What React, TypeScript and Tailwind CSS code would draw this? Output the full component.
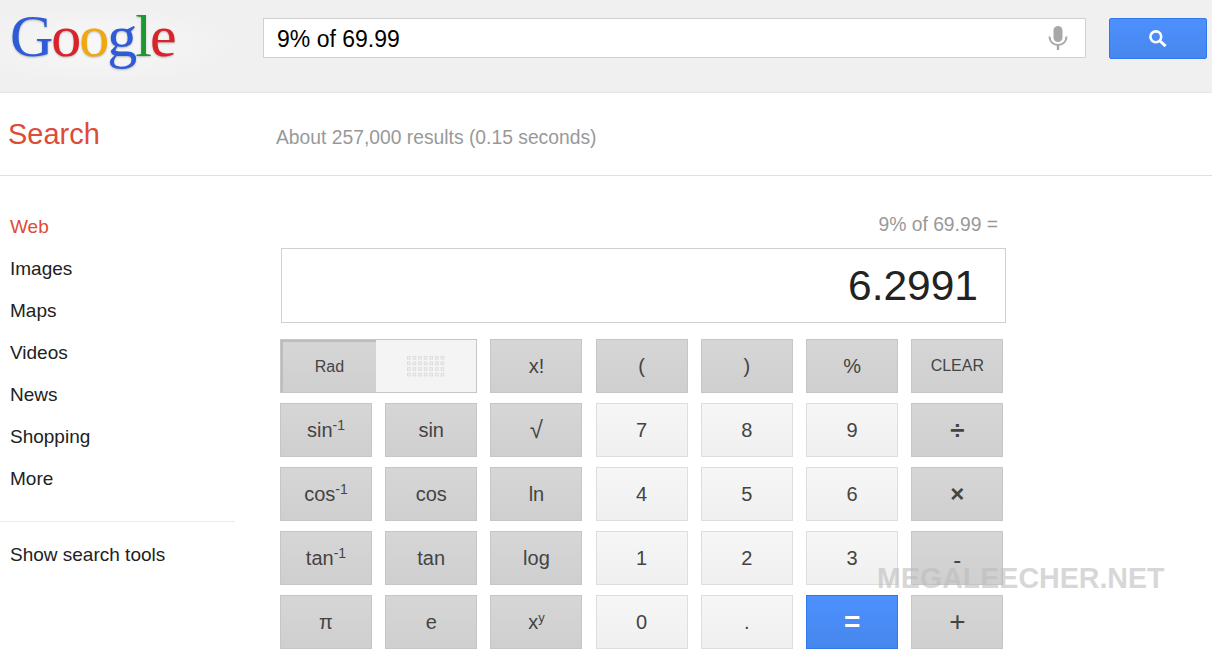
const font = { fontFamily: '"Liberation Sans", Arial, sans-serif' };

type Kind = "dark" | "light" | "blue";
const kinds: Record<Kind, string> = {
  dark: "border-[#c6c6c6] bg-gradient-to-b from-[#d6d6d6] to-[#cfcfcf] text-[#444444]",
  light: "border-[#dedede] bg-gradient-to-b from-[#f6f6f6] to-[#f0f0f0] text-[#444444]",
  blue: "border-[#3079ed] bg-gradient-to-b from-[#4d90fe] to-[#4787ed] text-white",
};

function Key({ kind = "dark", children, small }: { kind?: Kind; children: React.ReactNode; small?: boolean }) {
  return (
    <div className={`h-[54px] w-[92px] border flex items-center justify-center ${small ? "text-[16px]" : "text-[20px]"} ${kinds[kind]}`}>
      {children}
    </div>
  );
}

function Inv({ t }: { t: string }) {
  return (
    <span>
      {t}
      <sup className="text-[14px] relative -top-[7px] align-baseline">-1</sup>
    </span>
  );
}

function DegDots() {
  const cells: React.ReactNode[] = [];
  for (let r = 0; r < 4; r++) {
    for (let c = 0; c < 7; c++) {
      cells.push(<rect key={`${r}-${c}`} x={c * 5.6 + 0.5} y={r * 5.6 + 0.5} width="2.6" height="2.6" fill="none" stroke="#dcdcdc" strokeWidth="1" />);
    }
  }
  return (
    <svg width="38" height="21" viewBox="0 0 38 21">
      {cells}
    </svg>
  );
}

export default function App() {
  const side = ["Images", "Maps", "Videos", "News", "Shopping", "More"];
  return (
    <div className="relative h-[666px] w-[1212px] overflow-hidden bg-white" style={font}>
      <header className="flex h-[93px] border-b border-[#e5e5e5] bg-[#f0f0f0]">
        <div className="w-[263px] bg-[radial-gradient(ellipse_at_100px_45px,#f8f8f8_0%,#f0f0f0_60%)] pl-[10px]">
          <div className="text-[60px] leading-[72px] tracking-[-2px] [font-family:'Liberation_Serif',serif] [text-shadow:0_1px_2px_rgba(0,0,0,0.25)]">
            <span className="text-[#2f5bd9]">G</span>
            <span className="text-[#d8232a]">o</span>
            <span className="text-[#f2a80c]">o</span>
            <span className="text-[#2f5bd9]">g</span>
            <span className="text-[#1a9a2e]">l</span>
            <span className="text-[#d8232a]">e</span>
          </div>
        </div>
        <div className="mt-[18px] flex h-[40px] w-[823px] items-center justify-between border border-[#d0d0d0] bg-white pl-[13px] pr-[17px] text-[23px] text-black">
          <span className="relative top-[1px]">9% of 69.99</span>
          <svg width="20" height="26" viewBox="0 0 20 26" fill="none">
            <rect x="5.5" y="1" width="9" height="16" rx="4.5" fill="#a8a8a8" />
            <path d="M1.5 11.5c0 5 3.5 8.5 8.5 8.5s8.5-3.5 8.5-8.5" stroke="#a8a8a8" strokeWidth="2" />
            <path d="M10 20v5" stroke="#a8a8a8" strokeWidth="2.4" />
          </svg>
        </div>
        <div className="ml-[23px] mt-[18px] flex h-[41px] w-[98px] items-center justify-center rounded-[2px] border border-[#3079ed] bg-gradient-to-b from-[#4d90fe] to-[#4787ed]">
          <svg width="20" height="20" viewBox="0 0 20 20" fill="none">
            <circle cx="7.8" cy="7.8" r="5.4" stroke="white" strokeWidth="2.6" />
            <path d="M12 12l5.6 5.2" stroke="white" strokeWidth="3" />
          </svg>
        </div>
      </header>

      <div className="flex h-[83px] border-b border-[#e0e0e0]">
        <div className="w-[276px] pl-[8px] pt-[23px] text-[29px] leading-[36px] text-[#dd4b39]">Search</div>
        <div className="pt-[33px] text-[19.3px] leading-[24px] text-[#999999]">About 257,000 results (0.15 seconds)</div>
      </div>

      <div className="flex">
        <nav className="w-[280px] pt-[30px] text-[19px] text-[#222222]">
          <div className="h-[42px] w-[235px] pl-[10px] leading-[42px] text-[#dd4b39]">Web</div>
          {side.map((s) => (
            <div key={s} className="h-[42px] pl-[10px] leading-[42px]">
              {s}
            </div>
          ))}
          <div className="mt-[21px] w-[235px] border-t border-[#ebebeb] pl-[10px] pt-[21px] leading-[24px]">Show search tools</div>
        </nav>

        <main className="pt-[36px]">
          <div className="w-[718px] text-right text-[19.3px] leading-[26px] text-[#999999]">9% of 69.99 =</div>
          <div className="ml-[1px] mt-[10px] flex h-[75px] w-[725px] items-center justify-end border border-[#d0d0d0] pr-[27px] text-[42.5px] text-[#222222]">
            6.2991
          </div>
          <div className="mt-[16px] grid w-[723.4px] grid-cols-[repeat(7,92px)] justify-between gap-y-[10px]">
            <div className="col-span-2 flex h-[54px] w-[197px] border border-[#c6c6c6]">
              <div className="flex w-[95px] items-center justify-center border-l-2 border-t-2 border-[#bdbdbd] bg-gradient-to-b from-[#d6d6d6] to-[#cfcfcf] text-[16px] text-[#444444]">Rad</div>
              <div className="flex flex-1 items-center justify-center bg-[#f4f4f4]">
                <DegDots />
              </div>
            </div>
            <Key>x!</Key>
            <Key>(</Key>
            <Key>)</Key>
            <Key>%</Key>
            <Key small>CLEAR</Key>

            <Key><Inv t="sin" /></Key>
            <Key>sin</Key>
            <Key><span className="text-[24px]">√</span></Key>
            <Key kind="light">7</Key>
            <Key kind="light">8</Key>
            <Key kind="light">9</Key>
            <Key><span className="text-[26px] font-bold">÷</span></Key>

            <Key><Inv t="cos" /></Key>
            <Key>cos</Key>
            <Key>ln</Key>
            <Key kind="light">4</Key>
            <Key kind="light">5</Key>
            <Key kind="light">6</Key>
            <Key><span className="text-[24px] font-bold">×</span></Key>

            <Key><Inv t="tan" /></Key>
            <Key>tan</Key>
            <Key>log</Key>
            <Key kind="light">1</Key>
            <Key kind="light">2</Key>
            <Key kind="light">3</Key>
            <Key><span className="relative top-[2px] text-[24px]">-</span></Key>

            <Key>π</Key>
            <Key>e</Key>
            <Key>
              <span>x<sup className="relative -top-[7px] align-baseline text-[13px]">y</sup></span>
            </Key>
            <Key kind="light">0</Key>
            <Key kind="light">.</Key>
            <Key kind="blue"><span className="font-bold text-[28px]">=</span></Key>
            <Key><span className="text-[28px]">+</span></Key>
          </div>
        </main>
      </div>

      <div className="absolute left-[877px] top-[561px] text-[28.6px] font-bold leading-[34px] text-[#bcbcbc]/60">MEGALEECHER.NET</div>
    </div>
  );
}
